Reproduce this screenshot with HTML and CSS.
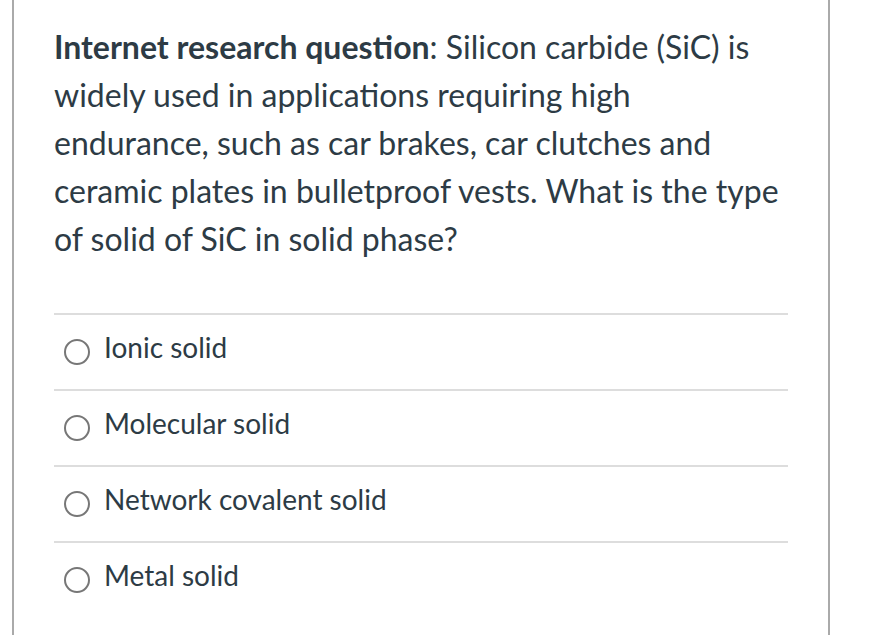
FILE: index.html
```html
<!DOCTYPE html>
<html>
<head>
<meta charset="utf-8">
<link rel="stylesheet" href="styles.css">
</head>
<body>
<div class="card">
  <div class="question">
    <p class="qtext"><strong>Internet research question</strong>: Silicon carbide (SiC) is widely used in applications requiring high endurance, such as car brakes, car clutches and ceramic plates in bulletproof vests. What is the type of solid of SiC in solid phase?</p>
  </div>
  <div class="answers">
    <div class="answer"><span class="radio"></span><span class="label">Ionic solid</span></div>
    <div class="answer"><span class="radio"></span><span class="label">Molecular solid</span></div>
    <div class="answer"><span class="radio"></span><span class="label">Network covalent solid</span></div>
    <div class="answer"><span class="radio"></span><span class="label">Metal solid</span></div>
  </div>
</div>
</body>
</html>
```

FILE: styles.css
```css
html, body {
  margin: 0;
  padding: 0;
  background: #ffffff;
}
body {
  font-family: Lato, "Liberation Sans", sans-serif;
  color: #2d3b45;
}
.card {
  margin-left: 12px;
  width: 818px;
  height: 635px;
  border-left: 2px solid #aaaaaa;
  border-right: 2px solid #aaaaaa;
  padding: 0 40px;
  box-sizing: border-box;
}
.question {
  padding-top: 23px;
}
.qtext {
  margin: 0;
  font-size: 32px;
  line-height: 48px;
  width: 734px;
}
.qtext strong {
  font-weight: 700;
}
.answers {
  margin-top: 50px;
  width: 734px;
}
.answer {
  display: flex;
  align-items: center;
  height: 74px;
  border-top: 2px solid #dddddd;
  padding-left: 10px;
}
.radio {
  width: 22px;
  height: 22px;
  border: 2px solid #777777;
  border-radius: 50%;
  flex: none;
}
.label {
  margin-left: 14px;
  padding-bottom: 10px;
  font-size: 28px;
}
```
